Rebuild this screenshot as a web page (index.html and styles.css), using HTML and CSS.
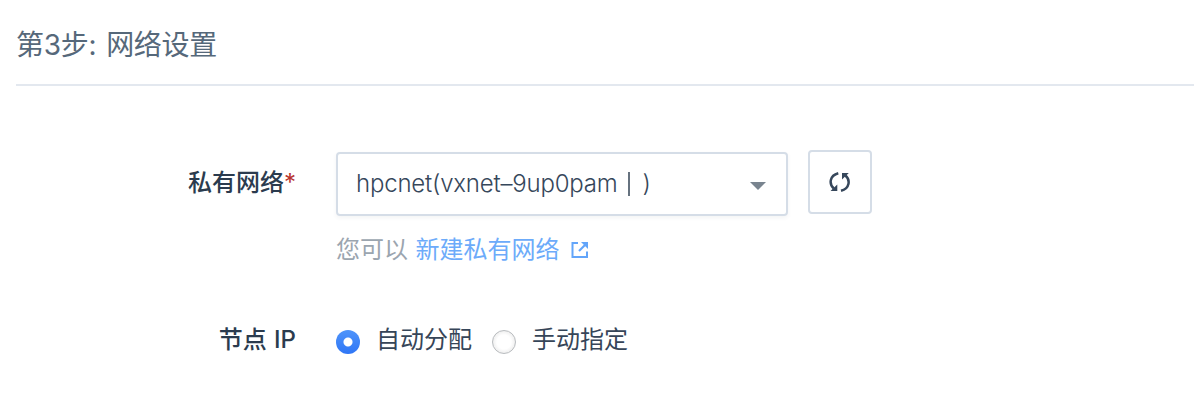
FILE: index.html
```html
<!DOCTYPE html>
<html lang="zh-CN">
<head>
<meta charset="utf-8">
<title>网络设置</title>
<link rel="stylesheet" href="styles.css">
</head>
<body>
<section class="step">
  <h2 class="step-title"><span class="title-step">第3步:</span><span class="title-name">网络设置</span></h2>
  <div class="row">
    <div class="label label-network">私有网络<span class="required">*</span></div>
    <div class="field">
      <div class="controls">
        <div class="select"><span class="value"><span class="value-name">hpcnet(vxnet–9up0pam</span><span class="bar"></span><span class="paren">)</span></span>
          <svg class="caret" width="16" height="8" viewBox="0 0 16 8"><path d="M0 0h16L8 8z" fill="#79848f"/></svg>
        </div>
        <button class="refresh" aria-label="刷新">
          <svg width="22" height="22" viewBox="0 0 22 22"><path d="M9.300 2.200C.500 4.500 -.200 13 4.800 17.500M12 19.800C20.800 17.500 21.500 9 16.500 4.500" fill="none" stroke="#36475b" stroke-width="2.500"/><path d="M1.500 20h6.800v-6.500zM19.800 2h-6.800v6.500z" fill="#36475b"/></svg>
        </button>
      </div>
      <div class="hint"><span>您可以</span><a class="link">新建私有网络</a>
        <svg class="external" width="18" height="18" viewBox="0 0 18 18"><path d="M7 2H1.500V16H16V10.500" fill="none" stroke="#63a5fa" stroke-width="2"/><path d="M8 10L15 3" stroke="#63a5fa" stroke-width="2.200"/><path d="M10 1H17V8z" fill="#63a5fa"/></svg>
      </div>
    </div>
  </div>
  <div class="row row-ip">
    <div class="label label-ip">节点 IP</div>
    <div class="options">
      <span class="radio checked"></span><span class="option">自动分配</span>
      <span class="radio"></span><span class="option">手动指定</span>
    </div>
  </div>
</section>
</body>
</html>
```
FILE: styles.css
```css
* { box-sizing: border-box; }
body {
  margin: 0;
  background: #fff;
  color: #36475b;
  font: 400 24px/36px Inter, "Noto Sans CJK SC", sans-serif;
}
.step { padding-left: 16px; height: 410px; overflow: hidden; }
.step-title {
  margin: 0;
  height: 86px;
  padding-top: 25px;
  border-bottom: 2px solid #e3e8ef;
  font-size: 28px;
  line-height: 40px;
  font-weight: 400;
  color: #56687a;
  display: flex;
  gap: 10px;
  letter-spacing: -.3px;
}
.row { display: flex; padding-top: 64px; }
.label {
  width: 280px;
  text-align: right;
  font-weight: 500;
  color: #2b3b4e;
}
.label-network { padding-top: 15px; }
.label-ip { padding-top: 1px; word-spacing: 1px; }
.required { color: #b8352f; font-weight: 400; }
.field { margin-left: 40px; }
.controls { display: flex; gap: 20px; }
.select {
  width: 452px;
  height: 64px;
  margin-top: 2px;
  padding: 0 20px 0 18px;
  border: 2px solid #d5dde7;
  border-radius: 4px;
  box-shadow: 0 2px 4px rgba(54, 71, 91, .06);
  display: flex;
  align-items: center;
  justify-content: space-between;
}
.value { display: flex; align-items: center; font-weight: 300; }
.value-name { letter-spacing: -.2px; }
.bar { width: 2px; height: 24px; margin: 0 12px 0 11px; background: #66727f; }
.caret { margin-top: 3px; }
.refresh {
  width: 64px;
  height: 64px;
  padding: 0;
  border: 2px solid #d5dde7;
  border-radius: 4px;
  background: #fff;
  display: flex;
  align-items: center;
  justify-content: center;
}
.hint { display: flex; align-items: center; margin-top: 16px; color: #9ba5af; }
.link { margin-left: 7.500px; color: #6cabfa; }
.external { margin-left: 11px; }
.row-ip { padding-top: 53px; }
.options { display: flex; align-items: center; margin-left: 40px; color: #364558; }
.radio {
  width: 24px;
  height: 24px;
  margin-top: 4px;
  border-radius: 50%;
  border: 1px solid #b9bcbf;
  background: radial-gradient(circle, #fff 45%, #ededed 75%);
}
.radio.checked {
  border: 0;
  background: radial-gradient(circle, #fff 4px, transparent 5px), linear-gradient(#4f94fa, #2f76f6);
}
.option { margin: 1px 20px 0 16px; }
```
